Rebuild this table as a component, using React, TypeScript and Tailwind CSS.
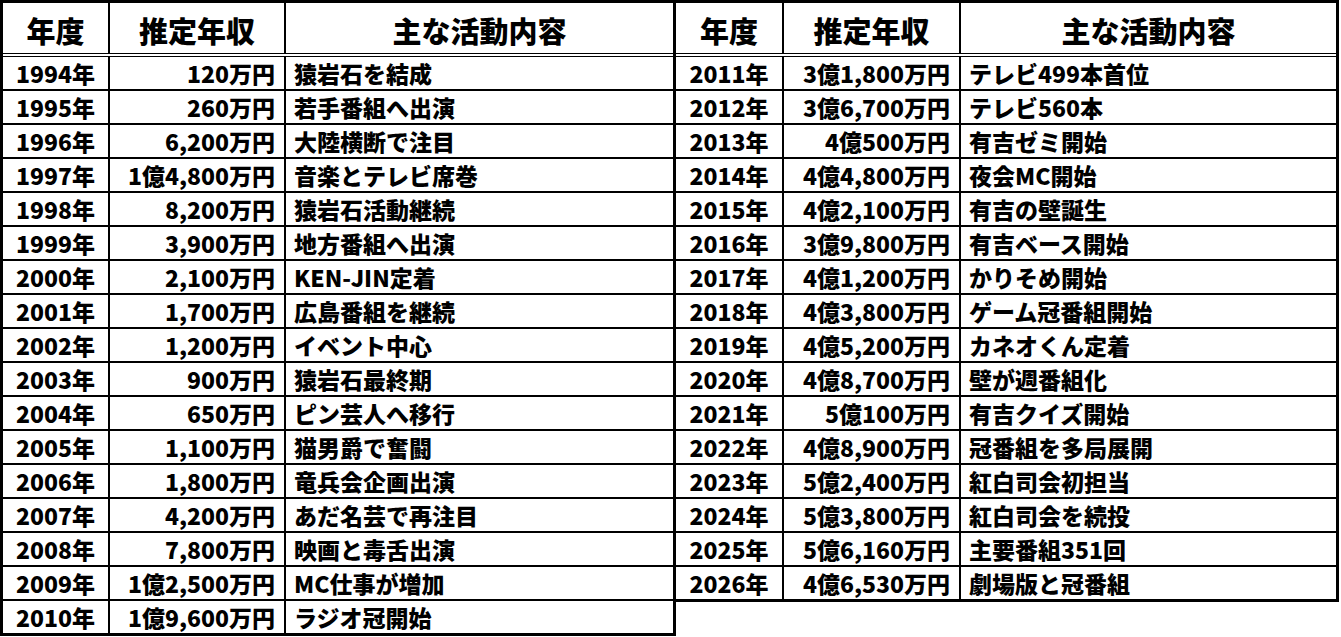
import React from "react";

type Row = [string, string, string];

const left: Row[] = [
  ["1994年", "120万円", "猿岩石を結成"],
  ["1995年", "260万円", "若手番組へ出演"],
  ["1996年", "6,200万円", "大陸横断で注目"],
  ["1997年", "1億4,800万円", "音楽とテレビ席巻"],
  ["1998年", "8,200万円", "猿岩石活動継続"],
  ["1999年", "3,900万円", "地方番組へ出演"],
  ["2000年", "2,100万円", "KEN-JIN定着"],
  ["2001年", "1,700万円", "広島番組を継続"],
  ["2002年", "1,200万円", "イベント中心"],
  ["2003年", "900万円", "猿岩石最終期"],
  ["2004年", "650万円", "ピン芸人へ移行"],
  ["2005年", "1,100万円", "猫男爵で奮闘"],
  ["2006年", "1,800万円", "竜兵会企画出演"],
  ["2007年", "4,200万円", "あだ名芸で再注目"],
  ["2008年", "7,800万円", "映画と毒舌出演"],
  ["2009年", "1億2,500万円", "MC仕事が増加"],
  ["2010年", "1億9,600万円", "ラジオ冠開始"],
];

const right: Row[] = [
  ["2011年", "3億1,800万円", "テレビ499本首位"],
  ["2012年", "3億6,700万円", "テレビ560本"],
  ["2013年", "4億500万円", "有吉ゼミ開始"],
  ["2014年", "4億4,800万円", "夜会MC開始"],
  ["2015年", "4億2,100万円", "有吉の壁誕生"],
  ["2016年", "3億9,800万円", "有吉ベース開始"],
  ["2017年", "4億1,200万円", "かりそめ開始"],
  ["2018年", "4億3,800万円", "ゲーム冠番組開始"],
  ["2019年", "4億5,200万円", "カネオくん定着"],
  ["2020年", "4億8,700万円", "壁が週番組化"],
  ["2021年", "5億100万円", "有吉クイズ開始"],
  ["2022年", "4億8,900万円", "冠番組を多局展開"],
  ["2023年", "5億2,400万円", "紅白司会初担当"],
  ["2024年", "5億3,800万円", "紅白司会を続投"],
  ["2025年", "5億6,160万円", "主要番組351回"],
  ["2026年", "4億6,530万円", "劇場版と冠番組"],
];

function Table({
  rows,
  w1,
  w2,
  w3,
  isLeft,
}: {
  rows: Row[];
  w1: string;
  w2: string;
  w3: string;
  isLeft: boolean;
}) {
  return (
    <div
      className={
        isLeft
          ? "flex flex-col border-[3px] border-black"
          : "flex flex-col border-y-[3px] border-r-[3px] border-black"
      }
    >
      <div className="flex h-[54px] border-b-4 border-double border-black text-[29px] leading-none">
        <div className={`${w1} flex items-center justify-center border-r-2 border-black pt-[5px]`}>年度</div>
        <div className={`${w2} flex items-center justify-center border-r-2 border-black pt-[5px]`}>推定年収</div>
        <div className={`${w3} flex items-center justify-center pt-[5px]`}>主な活動内容</div>
      </div>
      {rows.map((r, i) => (
        <div
          key={r[0]}
          className={
            i === rows.length - 1
              ? "flex h-[32px] text-[23px] leading-none"
              : "flex h-[34px] border-b-2 border-black text-[23px] leading-none"
          }
        >
          <div className={`${w1} flex items-center justify-center border-r-2 border-black`}>{r[0]}</div>
          <div className={`${w2} flex items-center justify-end border-r-2 border-black pr-[9px]`}>{r[1]}</div>
          <div className={`${w3} flex items-center justify-start pl-2`}>{r[2]}</div>
        </div>
      ))}
    </div>
  );
}

export default function App() {
  return (
    <div
      className="flex items-start bg-white text-black font-black w-[1341px] h-[637px] overflow-hidden"
      style={{ fontFamily: '"Noto Sans CJK JP", "Noto Sans", sans-serif' }}
    >
      <Table rows={left} w1="w-[107px]" w2="w-[176px]" w3="w-[387px]" isLeft={true} />
      <Table rows={right} w1="w-[108px]" w2="w-[177px]" w3="w-[375px]" isLeft={false} />
    </div>
  );
}
